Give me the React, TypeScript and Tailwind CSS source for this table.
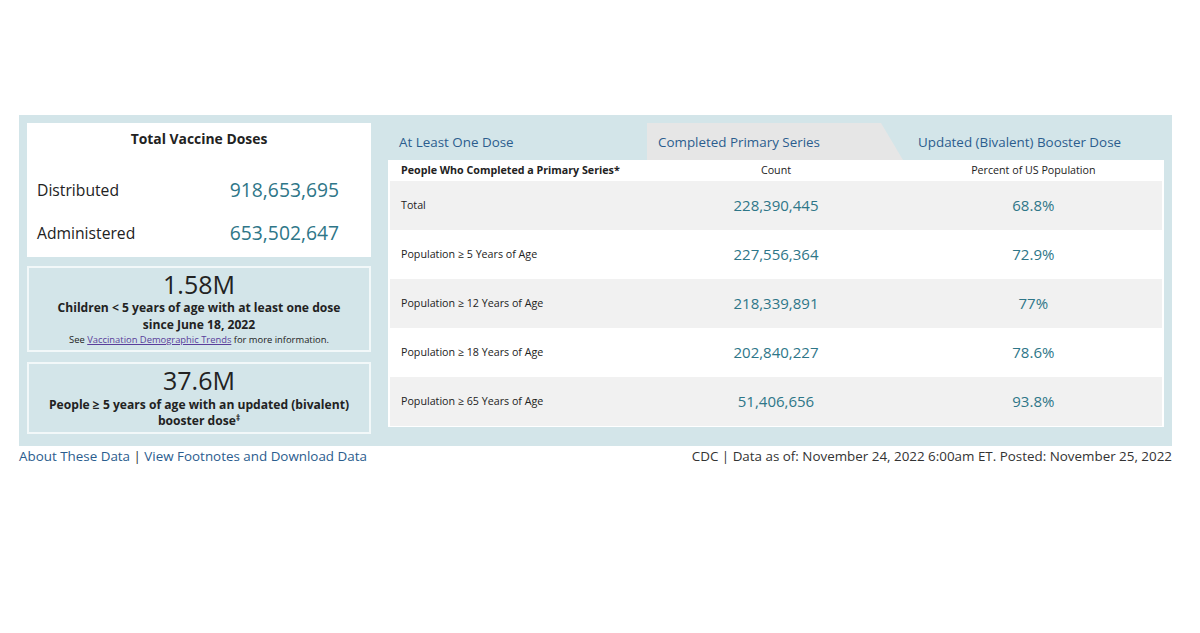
import React from "react";

const rows = [
  { label: "Total", count: "228,390,445", pct: "68.8%" },
  { label: "Population ≥ 5 Years of Age", count: "227,556,364", pct: "72.9%" },
  { label: "Population ≥ 12 Years of Age", count: "218,339,891", pct: "77%" },
  { label: "Population ≥ 18 Years of Age", count: "202,840,227", pct: "78.6%" },
  { label: "Population ≥ 65 Years of Age", count: "51,406,656", pct: "93.8%" },
];

export default function App() {
  return (
    <div
      className="w-[1200px] h-[633px] bg-white pt-[115px] pl-[19px] pr-[28px] text-[#222]"
      style={{ fontFamily: '"Open Sans", "Noto Sans", sans-serif' }}
    >
      <div className="flex bg-[#d3e5e9] pl-[8px] pr-[8px] pt-[8px] h-[331px]">
        {/* Left column */}
        <div className="w-[344px] flex flex-col">
          <div className="bg-white h-[134px] flex flex-col">
            <div className="text-center font-bold text-[13.9px] leading-[20px] pt-[6px]">
              Total Vaccine Doses
            </div>
            <div className="flex items-center justify-between pl-[10px] pr-[32px] mt-[27px]">
              <span className="text-[15.7px] leading-[24px]">Distributed</span>
              <span className="text-[19.3px] leading-[28px] text-[#2e7688]">918,653,695</span>
            </div>
            <div className="flex items-center justify-between pl-[10px] pr-[32px] mt-[15px]">
              <span className="text-[15.7px] leading-[24px]">Administered</span>
              <span className="text-[19.3px] leading-[28px] text-[#2e7688]">653,502,647</span>
            </div>
          </div>
          <div className="mt-[9px] h-[86px] border-2 border-[#f2f8f9] text-center flex flex-col items-center">
            <div className="text-[25px] leading-[28px] mt-[2px]">1.58M</div>
            <div className="font-bold text-[12.1px] leading-[17px] mt-[1px]">
              Children &lt; 5 years of age with at least one dose
              <br />
              since June 18, 2022
            </div>
            <div className="text-[9.4px] leading-[14px]">
              See{" "}
              <span className="underline text-[#5a3e9b]">Vaccination Demographic Trends</span>{" "}
              for more information.
            </div>
          </div>
          <div className="mt-[10px] h-[72px] border-2 border-[#f2f8f9] text-center flex flex-col items-center">
            <div className="text-[25px] leading-[28px] mt-[2px]">37.6M</div>
            <div className="font-bold text-[12.1px] leading-[16px] mt-[3px]">
              People ≥ 5 years of age with an updated (bivalent)
              <br />
              booster dose<sup className="text-[8px]">‡</sup>
            </div>
          </div>
        </div>

        {/* Right column */}
        <div className="ml-[17px] w-[776px] flex flex-col">
          <div className="h-[37px] flex relative">
            <div className="w-[259px] flex items-center pl-[11px] pt-[1px] text-[13.4px] text-[#2b5d8e]">
              At Least One Dose
            </div>
            <div className="relative w-[258px] flex items-center">
              <svg
                className="absolute left-0 top-0"
                width="258"
                height="37"
                viewBox="0 0 258 37"
              >
                <polygon points="0,0 234,0 256,37 0,37" fill="#e6e6e6" />
              </svg>
              <span className="relative pl-[11px] pt-[1px] text-[13.4px] text-[#2b5d8e]">
                Completed Primary Series
              </span>
            </div>
            <div className="flex items-center pl-[13px] pt-[1px] text-[13.4px] text-[#2b5d8e]">
              Updated (Bivalent) Booster Dose
            </div>
          </div>
          <div className="bg-white px-[2px] pb-[1px]">
            <div className="grid grid-cols-3 h-[21px] items-center text-[10.7px]">
              <div className="pl-[11px] font-bold">People Who Completed a Primary Series*</div>
              <div className="text-center">Count</div>
              <div className="text-center">Percent of US Population</div>
            </div>
            {rows.map((r, i) => (
              <div
                key={r.label}
                className={`grid grid-cols-3 h-[49px] items-center ${
                  i % 2 === 0 ? "bg-[#f1f1f1]" : "bg-white"
                }`}
              >
                <div className="pl-[11px] text-[10.7px]">{r.label}</div>
                <div className="text-center text-[15px] text-[#2e7688]">{r.count}</div>
                <div className="text-center text-[15px] text-[#2e7688]">{r.pct}</div>
              </div>
            ))}
          </div>
        </div>
      </div>
      <div className="flex justify-between text-[13.4px] leading-[20px]">
        <div className="text-[#2b5d8e]">
          About These Data <span className="text-[#333]">|</span> View Footnotes and Download Data
        </div>
        <div className="text-[#333]">
          CDC | Data as of: November 24, 2022 6:00am ET. Posted: November 25, 2022
        </div>
      </div>
    </div>
  );
}
